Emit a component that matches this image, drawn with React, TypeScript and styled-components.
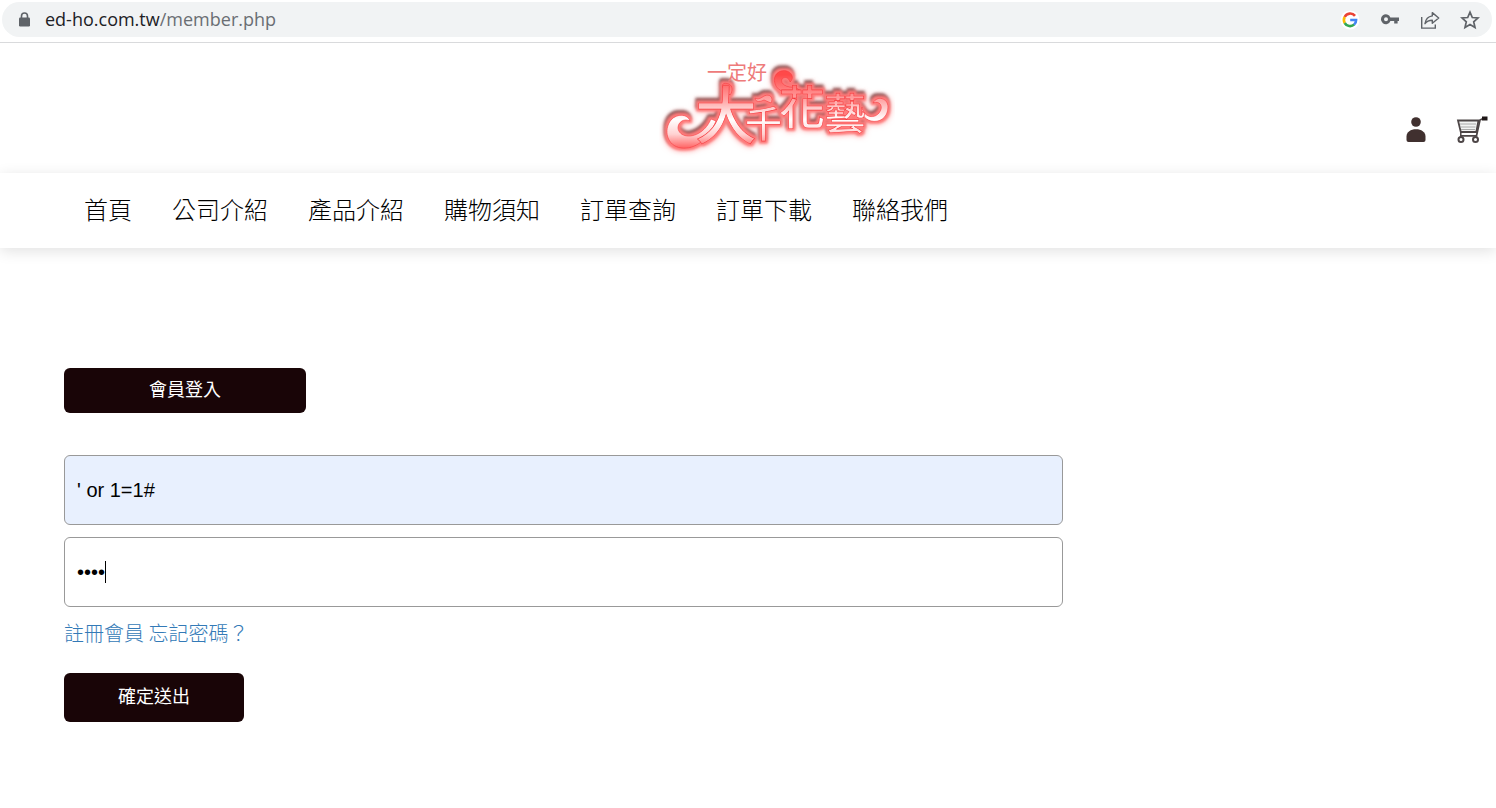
import React, { useState } from "react";
import styled, { createGlobalStyle } from "styled-components";

const GlobalStyle = createGlobalStyle`
  *, *::before, *::after { box-sizing: border-box; }
  body {
    margin: 0;
    background: #fff;
    color: #000;
    font-family: "Liberation Sans", "Noto Sans CJK TC", sans-serif;
  }
`;

const AddressBar = styled.div`
  padding: 2px 4px 5px 2px;
  border-bottom: 1px solid #d9dadc;
`;

const AddressPill = styled.div`
  display: flex;
  align-items: center;
  height: 35px;
  padding: 0 12px 0 16px;
  border-radius: 18px;
  background: #f1f3f4;
`;

const Url = styled.div`
  flex: 1;
  margin-left: 14px;
  padding-bottom: 2px;
  color: #202124;
  font: 400 18px/24px "Open Sans", sans-serif;
`;

const UrlPath = styled.span`
  color: #6a6e73;
`;

const BarActions = styled.div`
  display: flex;
  gap: 20px;
`;

const IconButton = styled.button`
  display: flex;
  align-items: center;
  justify-content: center;
  width: 20px;
  height: 20px;
  padding: 0;
  border: 0;
  background: none;
`;

const Header = styled.header`
  display: grid;
  grid-template-columns: 1fr auto 1fr;
  height: 130px;
  padding-right: 8px;
`;

const LogoLink = styled.a`
  grid-column: 2;
  display: block;
  margin-top: 12px;
  margin-left: 66px;
`;

const HeaderIcons = styled.div`
  display: flex;
  align-items: center;
  justify-content: flex-end;
  gap: 30px;
  height: 44px;
  margin-top: 65px;
`;

const IconLink = styled.a`
  display: block;
  line-height: 0;
`;

const Nav = styled.nav`
  display: flex;
  align-items: center;
  gap: 40px;
  height: 75px;
  padding: 0 84px 4px;
  background: #fff;
  box-shadow: 0 3px 14px rgba(0, 0, 0, 0.12);
`;

const NavLink = styled.a`
  color: #000;
  font: 300 24px/36px "Noto Sans CJK TC", sans-serif;
  text-decoration: none;
`;

const Main = styled.main`
  padding: 120px 64px 80px;
`;

const Form = styled.form`
  display: flex;
  flex-direction: column;
  align-items: flex-start;
  width: 73%;
`;

const DarkButton = styled.button<{ $wide?: boolean }>`
  width: ${(p) => (p.$wide ? 242 : 180)}px;
  height: ${(p) => (p.$wide ? 45 : 49)}px;
  padding: 0 0 5px;
  border: 0;
  border-radius: 6px;
  background: #190507;
  color: #fff;
  font: 400 18px/28px "Noto Sans CJK TC", sans-serif;
`;

const Fields = styled.div`
  display: flex;
  flex-direction: column;
  gap: 12px;
  width: 100%;
  margin-top: 42px;
`;

const Field = styled.div`
  position: relative;
`;

const TextInput = styled.input<{ $filled?: boolean }>`
  display: block;
  width: 100%;
  height: 70px;
  padding: 0 12px;
  border: 1px solid #999;
  border-radius: 6px;
  outline: 0;
  background: ${(p) => (p.$filled ? "#e8f0fe" : "#fff")};
  color: #000;
  caret-color: transparent;
  font: 20px "Liberation Sans", sans-serif;
`;

const Caret = styled.span`
  position: absolute;
  top: 24px;
  left: 41px;
  width: 1px;
  height: 22px;
  background: #000;
`;

const Links = styled.p`
  margin: 11px 0 25px;
  color: #337ab7;
  font: 300 20px/30px "Noto Sans CJK TC", sans-serif;
`;

const TextLink = styled.a`
  color: inherit;
  text-decoration: none;
`;

const Lock = () => (
  <svg width="13" height="16" viewBox="0 0 13 16">
    <path d="M3.5 6V4a3 3 0 0 1 6 0v2" fill="none" stroke="#5f6368" strokeWidth="1.6" />
    <rect x="1" y="5.5" width="11" height="9" rx="1.2" fill="#5f6368" />
  </svg>
);

const Google = () => (
  <svg width="20" height="20" viewBox="0 0 20 20">
    <circle cx="10" cy="10" r="9.5" fill="#fff" />
    <g fill="none" strokeWidth="2.6">
      <path d="M15 5.9A6.1 6.1 0 0 0 4.7 7" stroke="#ea4335" />
      <path d="M4.7 7a6.1 6.1 0 0 0 0 6" stroke="#fbbc05" />
      <path d="M4.7 13a6.1 6.1 0 0 0 9.6 1.4" stroke="#34a853" />
      <path d="M14.1 14.6a6.1 6.1 0 0 0 2-4.6H10.2" stroke="#4285f4" />
    </g>
  </svg>
);

const Key = () => (
  <svg width="20" height="20" viewBox="0 0 20 20">
    <path
      d="M10.4 7.500H19V11h-1.400v2.600h-3.400V11h-3.800A4.900 4.900 0 1 1 10.400 7.500ZM6 7.300a2 2 0 1 0 0 4 2 2 0 0 0 0-4Z"
      fill="#5f6368"
      fillRule="evenodd"
    />
  </svg>
);

const Share = () => (
  <svg width="20" height="20" viewBox="0 0 20 20" fill="none" stroke="#5f6368" strokeWidth="1.4">
    <path d="M1.7 7v11.1h13.6v-3.6" />
    <path d="M12.3 2.6 18.7 8l-6.4 5.3v-3.1c-3.5 0-5.7 1.1-7.3 3.5.6-4.3 3-7.2 7.3-7.8Z" strokeLinejoin="round" />
  </svg>
);

const Star = () => (
  <svg width="20" height="20" viewBox="0 0 20 20">
    <path
      d="m10 2.2 2.3 5.3 5.7.5-4.3 3.8 1.3 5.6-5-3-5 3 1.3-5.6L2 8l5.7-.5Z"
      fill="none"
      stroke="#5f6368"
      strokeWidth="1.7"
    />
  </svg>
);

const Member = () => (
  <svg width="20" height="26" viewBox="0 0 20 26" fill="#40302f">
    <circle cx="10" cy="5" r="4.8" />
    <path d="M.5 23v-3.5C.5 15 4.7 12.3 10 12.3s9.500 2.700 9.500 7.200V23q0 2-2 2h-15q-2 0-2-2Z" />
  </svg>
);

const Cart = () => (
  <svg width="32" height="28" viewBox="0 0 32 28" fill="none" stroke="#4d4647">
    <path d="M2 4.500h20.500L20.300 16H4.800Z" fill="#f3f3f3" strokeWidth="1.800" />
    <path d="M4 8h16M4.500 11h15M5 13.500h14" stroke="#aaa" />
    <path d="M4 19.800H20.500L24 4l3-1.500" strokeWidth="1.700" />
    <path d="M26 2.500h5.500" stroke="#1f1717" strokeWidth="4" />
    <path d="M4.800 16v3.800" strokeWidth="1.500" />
    <circle cx="5" cy="23.500" r="2.500" fill="#fff" strokeWidth="2" />
    <circle cx="19.500" cy="23.500" r="2.500" fill="#fff" strokeWidth="2" />
  </svg>
);

const LogoLetters = styled.g`
  font-family: "Noto Sans CJK TC", sans-serif;
`;

const Logo = () => (
  <svg width="236" height="106" viewBox="0 0 236 106" role="img" aria-label="一定好 大千花藝">
    <defs>
      <linearGradient id="petal" gradientUnits="userSpaceOnUse" x1="0" y1="20" x2="0" y2="94">
        <stop offset="0" stopColor="#ff4a4a" />
        <stop offset="0.35" stopColor="#ffa8a8" />
        <stop offset="0.6" stopColor="#ffffff" />
        <stop offset="0.8" stopColor="#ffd2d2" />
        <stop offset="1" stopColor="#ff5c5c" />
      </linearGradient>
      <filter id="halo" filterUnits="userSpaceOnUse" x="-10" y="-10" width="256" height="126">
        <feMorphology in="SourceAlpha" operator="dilate" radius="2" result="wide" />
        <feGaussianBlur in="wide" stdDeviation="3" result="glowShape" />
        <feFlood floodColor="#ff9a9a" />
        <feComposite in2="glowShape" operator="in" result="glow" />
        <feOffset in="wide" dx="-1" dy="-3" />
        <feGaussianBlur stdDeviation="1.4" result="shadeShape" />
        <feFlood floodColor="#602222" floodOpacity="0.8" />
        <feComposite in2="shadeShape" operator="in" result="shade" />
        <feGaussianBlur in="wide" stdDeviation="1.2" result="bodyShape" />
        <feFlood floodColor="#ff7c7c" />
        <feComposite in2="bodyShape" operator="in" result="body" />
        <feMerge>
          <feMergeNode in="glow" />
          <feMergeNode in="shade" />
          <feMergeNode in="body" />
          <feMergeNode in="SourceGraphic" />
        </feMerge>
      </filter>
    </defs>
    <g fill="url(#petal)" stroke="#f5383c" strokeWidth="0.6" filter="url(#halo)">
      <path d="M57 66C50 84 36 95 22 93C8 91 4 75 12 65C18 58 29 59 31 66C25 63 19 67 19 73C20 82 33 84 43 76C48 72 50 68 52 64Z" />
      <path d="M64 33C62 29 65 27 70 29C74 31 74 36 71 40Z" />
      <path d="M116 29C113 20 120 14 128 16C134 18 135 24 131 27C130 23 126 21 123 24C121 29 128 33 136 32L142 36C131 39 119 38 116 29Z" />
      <path d="M105 45C99 48 96 46 96 43C99 45 102 43 105 41C111 38 115 43 112 48Z" />
      <path d="M203 52C204 61 214 65 220 58C225 52 221 45 214 48C218 40 229 43 229 52C229 63 220 68 212 66C205 64 201 58 203 52Z" />
      <LogoLetters fontWeight="500">
        <text x="36" y="84" fontSize="62">大</text>
        <text x="86" y="83" fontSize="37">千</text>
        <text x="120" y="69" fontSize="46">花</text>
        <text x="165" y="74" fontSize="42">藝</text>
      </LogoLetters>
    </g>
    <LogoLetters fill="#ee7b7b" fontWeight="400" fontSize="20">
      <text x="48" y="25">一定好</text>
    </LogoLetters>
  </svg>
);

const navItems = ["首頁", "公司介紹", "產品介紹", "購物須知", "訂單查詢", "訂單下載", "聯絡我們"];

const App: React.FC = () => {
  const [account, setAccount] = useState("' or 1=1#");
  const [password, setPassword] = useState("1234");

  return (
    <>
      <GlobalStyle />
      <AddressBar>
        <AddressPill>
          <Lock />
          <Url>
            ed-ho.com.tw<UrlPath>/member.php</UrlPath>
          </Url>
          <BarActions>
            <IconButton aria-label="Google"><Google /></IconButton>
            <IconButton aria-label="Passwords"><Key /></IconButton>
            <IconButton aria-label="Share"><Share /></IconButton>
            <IconButton aria-label="Bookmark"><Star /></IconButton>
          </BarActions>
        </AddressPill>
      </AddressBar>
      <Header>
        <LogoLink href="#home"><Logo /></LogoLink>
        <HeaderIcons>
          <IconLink href="#member" aria-label="會員"><Member /></IconLink>
          <IconLink href="#cart" aria-label="購物車"><Cart /></IconLink>
        </HeaderIcons>
      </Header>
      <Nav>
        {navItems.map((item) => (
          <NavLink key={item} href={`#${item}`}>{item}</NavLink>
        ))}
      </Nav>
      <Main>
        <Form onSubmit={(e) => e.preventDefault()}>
          <DarkButton type="button" $wide>會員登入</DarkButton>
          <Fields>
            <Field>
              <TextInput
                $filled
                aria-label="帳號"
                value={account}
                onChange={(e) => setAccount(e.target.value)}
              />
            </Field>
            <Field>
              <TextInput
                type="password"
                aria-label="密碼"
                value={password}
                onChange={(e) => setPassword(e.target.value)}
              />
              <Caret />
            </Field>
          </Fields>
          <Links>
            <TextLink href="#register">註冊會員</TextLink>{" "}
            <TextLink href="#forgot">忘記密碼？</TextLink>
          </Links>
          <DarkButton type="submit">確定送出</DarkButton>
        </Form>
      </Main>
    </>
  );
};

export default App;
